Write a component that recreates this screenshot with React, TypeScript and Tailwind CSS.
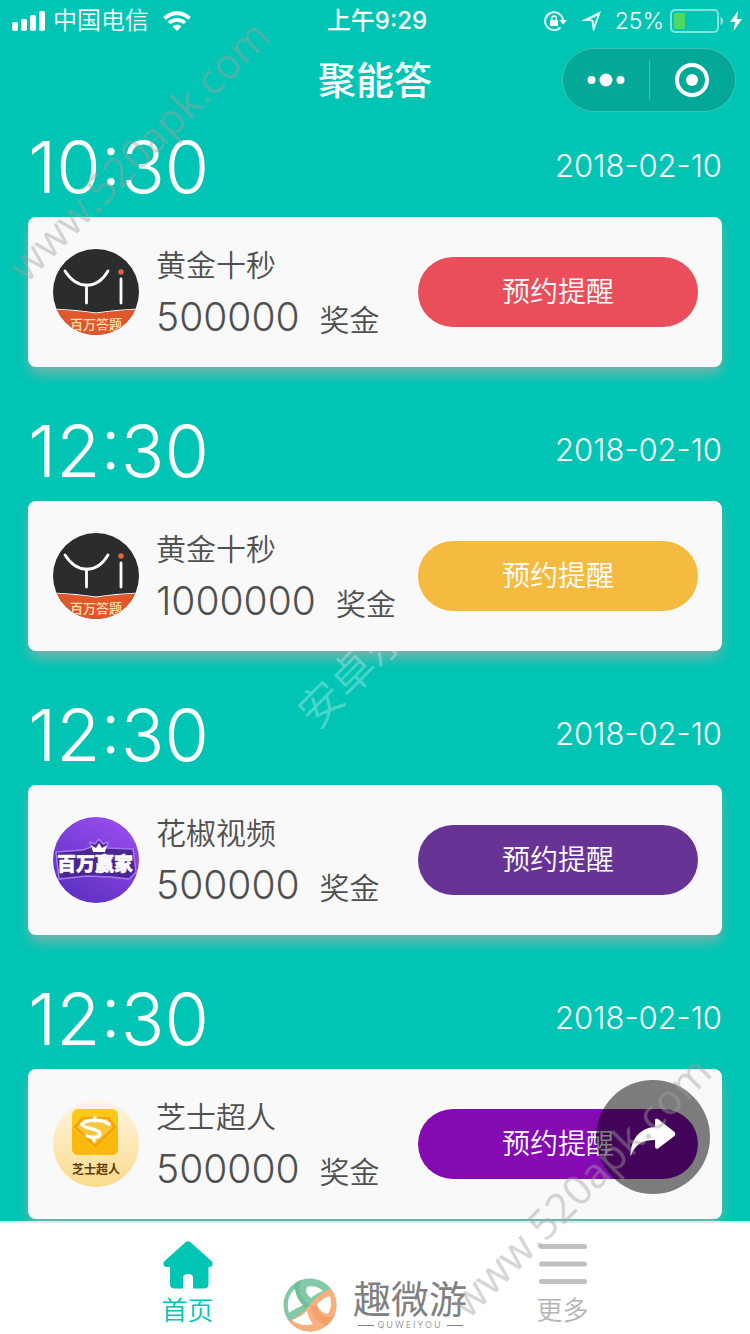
import React, { FC, ReactNode } from 'react';
import { clsx } from 'clsx';

type LogoName = 'yi' | 'winner' | 'cheese';

interface Quiz {
    id: number;
    time: string;
    date: string;
    name: string;
    prize: string;
    logo: LogoName;
    buttonClass: string;
}

const quizzes: Quiz[] = [
    { id: 1, time: '10:30', date: '2018-02-10', name: '黄金十秒', prize: '500000', logo: 'yi', buttonClass: 'bg-[#ea4e5a]' },
    { id: 2, time: '12:30', date: '2018-02-10', name: '黄金十秒', prize: '1000000', logo: 'yi', buttonClass: 'bg-[#f4bb40]' },
    { id: 3, time: '12:30', date: '2018-02-10', name: '花椒视频', prize: '500000', logo: 'winner', buttonClass: 'bg-[#673395]' },
    { id: 4, time: '12:30', date: '2018-02-10', name: '芝士超人', prize: '500000', logo: 'cheese', buttonClass: 'bg-[#850ab2]' },
];

const YiLogo: FC = () => (
    <svg viewBox="0 0 86 86" className="size-full" aria-hidden="true">
        <defs>
            <clipPath id="yi-clip"><circle cx="43" cy="43" r="43" /></clipPath>
        </defs>
        <g clipPath="url(#yi-clip)">
            <rect width="86" height="86" fill="#2a2c2e" />
            <path d="M0 60 Q24 61 43 64 Q62 61 86 60 V86 H0Z" fill="#e2562c" />
            <path d="M0 60 Q24 61 43 64 Q62 61 86 60" fill="none" stroke="#fff" strokeWidth="1.2" />
            <path d="M12 22 C24 41 44 41 55 22 M33.500 36 V54 M68 30 V54" fill="none" stroke="#fff" strokeWidth="2.800" strokeLinecap="round" />
            <circle cx="68" cy="23" r="2.800" fill="#e0633a" />
            <text x="43" y="80" textAnchor="middle" fontSize="13" fontWeight="500" fill="#ffe2b0">百万答题</text>
        </g>
    </svg>
);

const WinnerLogo: FC = () => (
    <svg viewBox="0 0 86 86" className="size-full" aria-hidden="true">
        <defs>
            <linearGradient id="winner-bg" x1="0.8" y1="0" x2="0.2" y2="1">
                <stop offset="0" stopColor="#9a4df0" />
                <stop offset="1" stopColor="#5a2fc0" />
            </linearGradient>
        </defs>
        <circle cx="43" cy="43" r="43" fill="url(#winner-bg)" />
        <path d="M3 35 L30 33 L38 30 L37 25 L42 27 L46 22 L50 27 L55 25 L54 31 L80 32 L83 55 L76 62 L58 60 L34 59 L6 62Z" fill="#4a2594" stroke="#a877f0" strokeWidth="1.500" strokeLinejoin="round" />
        <path d="M40 35 L38 28 L43 31 L46 26 L49 31 L54 28 L52 35Z" fill="#fff" />
        <text x="42" y="54" textAnchor="middle" fontSize="19" fontWeight="900" fill="#fff" stroke="#fff" strokeWidth="0.500">百万赢家</text>
    </svg>
);

const CheeseLogo: FC = () => (
    <svg viewBox="0 0 86 86" className="size-full" aria-hidden="true">
        <defs>
            <linearGradient id="cheese-bg" x1="0" y1="0" x2="0" y2="1">
                <stop offset="0" stopColor="#fff5de" />
                <stop offset="1" stopColor="#fadb8c" />
            </linearGradient>
        </defs>
        <circle cx="43" cy="43" r="43" fill="url(#cheese-bg)" />
        <rect x="19" y="8" width="46" height="46" rx="6" fill="#fdc818" />
        <path d="M19 27 L41 48 L65 27 V48 a6 6 0 0 1 -6 6 H46 a5 4 0 0 0 -8 0 H25 a6 6 0 0 1 -6 -6Z" fill="#fbb90e" />
        <path d="M29 16 H56 L64 26 L42 47 L20 26Z" fill="#f5a30b" />
        <path d="M31 18 H54 L60 26 L42 43 L24 26Z" fill="#fac637" />
        <path d="M56 23 C49 18 34 18 29 23 C28 27 48 28 47 33 C46 37 39 37 34 35" fill="none" stroke="#fff" strokeWidth="3.500" strokeLinecap="round" />
        <path d="M42 16 V20 M41 37 V40" fill="none" stroke="#fff" strokeWidth="3" strokeLinecap="round" />
        <text x="43" y="73" textAnchor="middle" fontSize="12" fontWeight="700" fill="#5b3a0c">芝士超人</text>
    </svg>
);

const logos: Record<LogoName, ReactNode> = {
    yi: <YiLogo />,
    winner: <WinnerLogo />,
    cheese: <CheeseLogo />,
};

const StatusBar: FC = () => (
    <div className="grid h-10 grid-cols-[1fr_auto_1fr] items-center pl-3 pr-2 pt-0.5 text-2xl">
        <div className="flex items-center gap-2">
            <svg width="33" height="20" viewBox="0 0 33 20" fill="#fff" aria-hidden="true">
                <rect x="0" y="11" width="6" height="9" rx="2" />
                <rect x="9" y="8" width="6" height="12" rx="2" />
                <rect x="18" y="4" width="6" height="16" rx="2" />
                <rect x="27" y="0" width="6" height="20" rx="2" />
            </svg>
            <span className="font-[350]">中国电信</span>
            <svg className="ml-1.5" width="28" height="20" viewBox="0 0 28 20" fill="none" stroke="#fff" strokeWidth="3.800" aria-hidden="true">
                <path d="M1.500 7.500 C8.500 0.500 19.500 0.500 26.500 7.500" />
                <path d="M6 12 C10.500 7.700 17.500 7.700 22 12" />
                <path d="M14 20 L9.500 15.500 C12 13.300 16 13.300 18.500 15.500Z" fill="#fff" stroke="none" />
            </svg>
        </div>
        <span className="font-medium">上午9:29</span>
        <div className="flex items-center justify-end gap-1.5">
            <svg className="mr-2" width="23" height="20" viewBox="0 0 23 20" aria-hidden="true">
                <path d="M16.500 16.500 A9 9 0 1 1 19 9" fill="none" stroke="#e2fffb" strokeWidth="2" />
                <path d="M15.500 9 H23 L19.200 13.500Z" fill="#fff" />
                <rect x="6" y="9" width="8" height="6" rx="0.500" fill="#fff" />
                <path d="M7.800 9.500 V7.200 a2.250 2.250 0 0 1 4.500 0 V9.500" fill="none" stroke="#fff" strokeWidth="1.400" />
            </svg>
            <svg className="mr-2" width="20" height="20" viewBox="0 0 20 20" aria-hidden="true">
                <path d="M0 10 L20 0 L13 20 H12 L10.500 10Z M12.500 9 L13 14 L16.500 4.500 L9 8.500Z" fill="#e2fffb" fillRule="evenodd" />
            </svg>
            <span className="text-[23px] font-[350]">25%</span>
            <svg width="54" height="24" viewBox="0 0 54 24" aria-hidden="true">
                <rect x="1" y="1" width="47" height="22" rx="4" fill="none" stroke="#7fe5dc" strokeWidth="2" />
                <rect x="4" y="4" width="11" height="16" rx="1" fill="#4cd964" />
                <path d="M50.500 8 C54 9 54 15 50.500 16Z" fill="#7fe5dc" />
            </svg>
            <svg width="12" height="20" viewBox="0 0 12 20" fill="#fff" aria-hidden="true">
                <path d="M8 0 L0 11 H5 L3.500 20 L12 8 H7Z" />
            </svg>
        </div>
    </div>
);

const TitleBar: FC = () => (
    <header className="grid h-20 grid-cols-[1fr_auto_1fr] items-center px-3.5">
        <h1 className="col-start-2 text-[38px] font-medium leading-none">聚能答</h1>
        <div className="flex h-16 w-[174px] items-center justify-self-end rounded-full border border-[#3fc3b8] bg-[#04a898]">
            <button type="button" aria-label="更多操作" className="flex flex-1 justify-center">
                <svg width="38" height="14" viewBox="0 0 38 14" fill="#fff" aria-hidden="true">
                    <circle cx="4.500" cy="7" r="4" />
                    <circle cx="19" cy="7" r="6.500" />
                    <circle cx="33.500" cy="7" r="4" />
                </svg>
            </button>
            <span className="h-10 w-px bg-[#3fc3b8]" />
            <button type="button" aria-label="关闭" className="flex flex-1 justify-center">
                <svg width="36" height="36" viewBox="0 0 36 36" aria-hidden="true">
                    <circle cx="18" cy="18" r="15" fill="none" stroke="#fff" strokeWidth="4" />
                    <circle cx="18" cy="18" r="6" fill="#fff" />
                </svg>
            </button>
        </div>
    </header>
);

const QuizSection: FC<{ quiz: Quiz }> = ({ quiz }) => (
    <section>
        <div className="flex h-[97px] items-center justify-between pb-1">
            <h2 className="text-[72px] font-[350] leading-none">{quiz.time}</h2>
            <span className="text-[31px] font-light">{quiz.date}</span>
        </div>
        <div className="flex h-[150px] items-center rounded-lg bg-[#f9f9f9] pl-[25px] pr-6 text-[#505050] shadow-[0_8px_14px_-2px_rgba(170,170,170,0.8)]">
            <div className="size-[86px] shrink-0">{logos[quiz.logo]}</div>
            <div className="ml-[17px] flex-1">
                <h3 className="text-[30px] font-[350] leading-10">{quiz.name}</h3>
                <p className="mt-3 flex items-baseline gap-5 leading-10">
                    <span className="text-[39px] font-[350]">{quiz.prize}</span>
                    <span className="text-[30px] font-[350]">奖金</span>
                </p>
            </div>
            <button type="button" className={clsx('h-[70px] w-[280px] shrink-0 rounded-full text-[28px] font-[350] text-white', quiz.buttonClass)}>
                预约提醒
            </button>
        </div>
    </section>
);

const SiteMark: FC = () => (
    <div className="pointer-events-none absolute bottom-0.5 left-1/2 flex -translate-x-1/2 items-center gap-4 text-[#808080]">
        <svg width="54" height="54" viewBox="0 0 54 54" aria-hidden="true">
            <defs>
                <clipPath id="mark-clip"><circle cx="27" cy="27" r="26.500" /></clipPath>
            </defs>
            <g clipPath="url(#mark-clip)">
                <rect width="54" height="54" fill="#84c9a6" />
                <path d="M54 9 Q38 12 27 27 Q19 38 2 45 V54 H54Z" fill="#f9ae7c" />
                <path d="M20 0 Q10 14 27 27 L22 30 Q8 20 12 4Z" fill="#6fbd98" />
                <path d="M34 27 Q35 42 52 38 L46 48 Q30 44 27 28Z" fill="#f5a06c" />
            </g>
            <path d="M5 30 C4 21 8 14 12 11 C13 18 16 23 20 27 C15 30 9 32 6 35Z" fill="#fff" />
            <path d="M24 9 C30 7 36 9 40 13 C35 15 31 17 28 20 C24 17 22 13 24 9Z" fill="#fff" />
            <path d="M34 26 C38 22 43 19 47 18 C49 24 48 31 45 36 C39 35 35 31 34 26Z" fill="#fff" />
            <path d="M9 42 C15 40 20 37 24 33 C25 38 27 42 30 46 C23 48 14 47 9 42Z" fill="#fff" />
        </svg>
        <div className="flex flex-col items-center">
            <span className="text-[38px] font-normal leading-10">趣微游</span>
            <span className="flex items-center gap-1 text-[9px] leading-3 tracking-[2px] before:h-px before:w-4 before:bg-[#808080] after:h-px after:w-4 after:bg-[#808080]">
                QUWEIYOU
            </span>
        </div>
    </div>
);

const TabBar: FC = () => (
    <nav className="relative grid h-[113px] shrink-0 grid-cols-2 border-t-2 border-[#d5efec] bg-white text-[26px] font-[350] leading-8">
        <a href="#home" className="flex flex-col items-center gap-1.5 pt-[18px] text-[#00c5b4]">
            <svg width="50" height="48" viewBox="0 0 50 48" fill="currentColor" aria-hidden="true">
                <path d="M22.500 1.200 Q25 -0.800 27.500 1.200 L49 20.500 Q51 25.500 47 26 H45.500 V43 Q45.500 47.500 41 47.500 H30 V37 Q30 33 25 33 Q20 33 20 37 V47.500 H11.500 Q7 47.500 7 43 V26 H3 Q-1 25.500 1 20.500Z" />
            </svg>
            首页
        </a>
        <a href="#more" className="flex flex-col items-center gap-1.5 pt-[18px] text-[#b5b5b5]">
            <svg width="48" height="48" viewBox="0 0 48 48" fill="none" stroke="#c1c1c1" strokeWidth="5" strokeLinecap="round" aria-hidden="true">
                <path d="M2.500 5.500 H45.500 M2.500 23 H45.500 M2.500 40.500 H45.500" />
            </svg>
            更多
        </a>
        <SiteMark />
    </nav>
);

const ShareButton: FC = () => (
    <button type="button" aria-label="分享" className="fixed bottom-[140px] right-10 flex size-[114px] items-center justify-center rounded-full bg-black/50">
        <svg width="46" height="39" viewBox="0 0 46 39" fill="#fff" aria-hidden="true">
            <path d="M0.500 38.500 C0.500 21 10 10 25 9 V2 Q25.500 -0.500 28 1 L44.500 14 Q46 16 44.500 18 L28 30.500 Q25.500 31.500 25 29 V22 C13 22 5 26 0.500 38.500Z" />
        </svg>
    </button>
);

const Watermark: FC<{ className: string; children: ReactNode }> = ({ className, children }) => (
    <span className={clsx('pointer-events-none absolute -translate-x-1/2 -translate-y-1/2 -rotate-45 whitespace-nowrap leading-none', className)}>
        {children}
    </span>
);

const App: FC = () => (
    <div className="relative flex h-screen flex-col overflow-hidden bg-[#00c5b4] font-['Inter','Noto_Sans_CJK_SC',sans-serif] text-white">
        <StatusBar />
        <TitleBar />
        <main className="flex flex-1 flex-col gap-[37px] overflow-y-auto px-7">
            {quizzes.map(quiz => (
                <QuizSection key={quiz.id} quiz={quiz} />
            ))}
        </main>
        <TabBar />
        <ShareButton />
        <Watermark className="left-[138px] top-[150px] font-['Open_Sans',sans-serif] text-[42px] text-[#a0a0a0]/45">www.520apk.com</Watermark>
        <Watermark className="left-[352px] top-[673px] text-[44px] font-[350] text-white/30">安卓乐</Watermark>
        <Watermark className="left-[580px] top-[1186px] font-['Open_Sans',sans-serif] text-[42px] text-[#a0a0a0]/45">www.520apk.com</Watermark>
    </div>
);

export default App;
